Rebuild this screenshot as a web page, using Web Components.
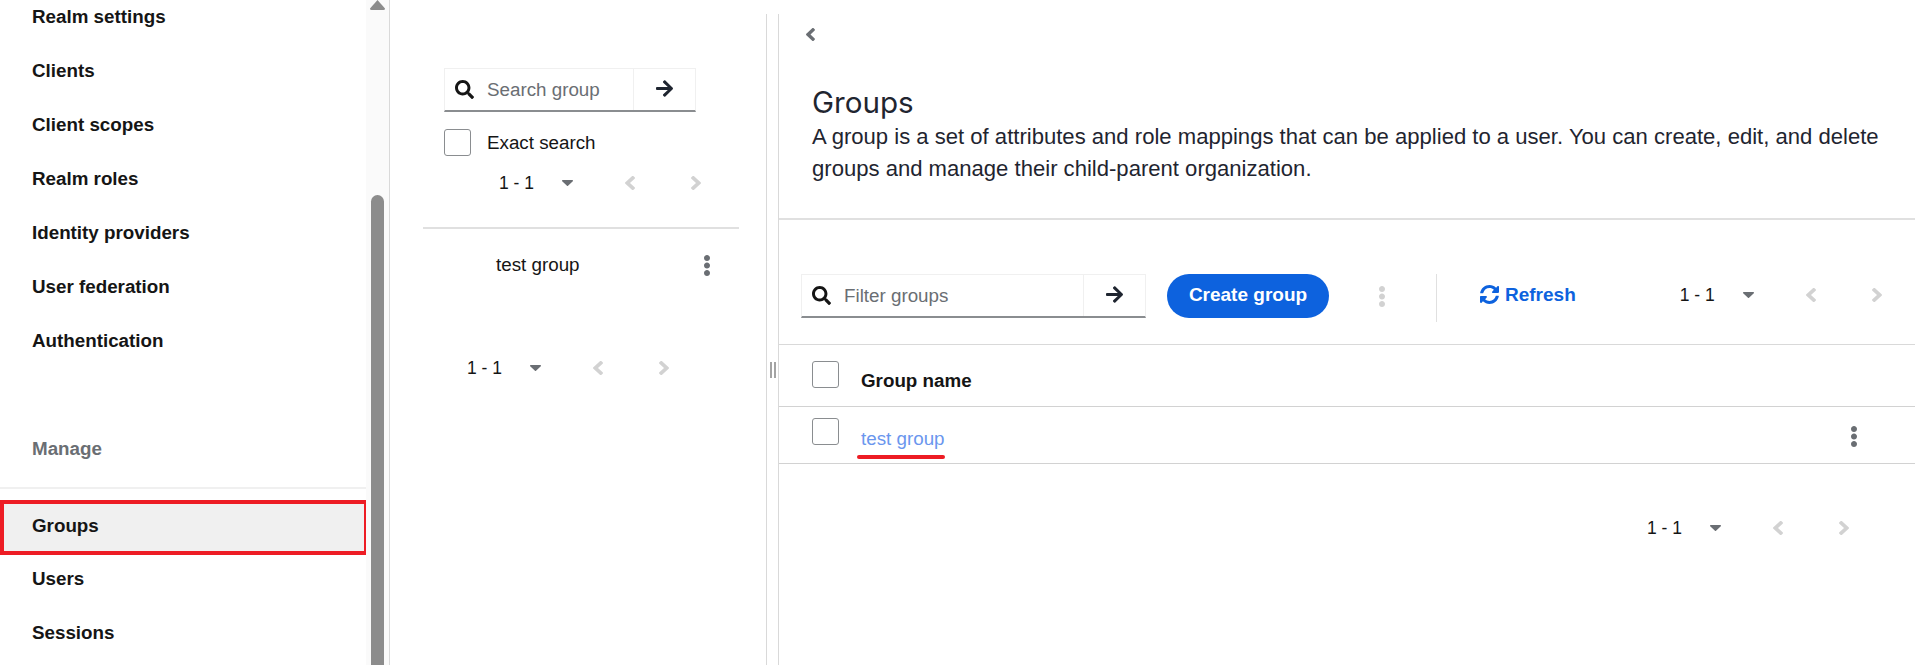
<!DOCTYPE html>
<html>
<head>
<meta charset="utf-8">
<title>Groups</title>
<style>
  html, body { margin: 0; height: 100%; overflow: hidden; background: #fff; }
  body { font-family: "Liberation Sans", Arial, sans-serif; color: #151515; }
</style>
</head>
<body>
<groups-page></groups-page>

<script>
const ICONS = {
  search: '<svg viewBox="0 0 512 512" fill="currentColor"><path d="M505 442.7 405.3 343c-4.5-4.5-10.6-7-17-7H372c27.6-35.3 44-79.7 44-128C416 93.1 322.9 0 208 0S0 93.1 0 208s93.1 208 208 208c48.3 0 92.7-16.4 128-44v16.3c0 6.4 2.5 12.5 7 17l99.7 99.7c9.4 9.4 24.6 9.4 33.9 0l28.3-28.3c9.4-9.4 9.4-24.6.1-34zM208 336c-70.7 0-128-57.2-128-128 0-70.7 57.2-128 128-128 70.7 0 128 57.2 128 128 0 70.7-57.2 128-128 128z"/></svg>',
  arrow: '<svg viewBox="0 32 448 448" fill="currentColor"><path d="m190.5 66.9 22.2-22.2c9.4-9.4 24.6-9.4 33.9 0L441 239c9.4 9.4 9.4 24.6 0 33.9L246.6 467.3c-9.4 9.4-24.6 9.4-33.9 0l-22.2-22.2c-9.5-9.5-9.3-25 .4-34.3L311.4 296H24c-13.3 0-24-10.7-24-24v-32c0-13.3 10.7-24 24-24h287.4L190.9 101.2c-9.8-9.3-10-24.8-.4-34.3z"/></svg>',
  caret: '<svg viewBox="12 192 296 170" preserveAspectRatio="none" fill="currentColor"><path d="M31.3 192h257.3c17.8 0 26.7 21.5 14.1 34.1L174.1 354.8c-7.8 7.8-20.5 7.8-28.3 0L17.2 226.1C4.6 213.5 13.5 192 31.3 192z"/></svg>',
  left: '<svg viewBox="24 96 208 320" preserveAspectRatio="none" fill="currentColor"><path d="M31.7 239l136-136c9.4-9.4 24.6-9.4 33.9 0l22.6 22.6c9.4 9.4 9.4 24.6 0 33.9L127.9 256l96.4 96.4c9.4 9.4 9.4 24.6 0 33.9L201.7 409c-9.4 9.4-24.6 9.4-33.9 0l-136-136c-9.5-9.4-9.5-24.6-.1-34z"/></svg>',
  right: '<svg viewBox="24 96 208 320" preserveAspectRatio="none" fill="currentColor"><path d="M224.3 273l-136 136c-9.4 9.4-24.6 9.4-33.9 0l-22.6-22.6c-9.4-9.4-9.4-24.6 0-33.9l96.4-96.4-96.4-96.4c-9.4-9.4-9.4-24.6 0-33.9L54.3 103c9.4-9.4 24.6-9.4 33.9 0l136 136c9.5 9.4 9.5 24.6.1 34z"/></svg>',
  kebab: '<svg viewBox="24 8 144 496" preserveAspectRatio="none" fill="currentColor"><path d="M96 184c39.8 0 72 32.2 72 72s-32.2 72-72 72-72-32.2-72-72 32.2-72 72-72zM24 80c0 39.8 32.2 72 72 72s72-32.2 72-72S135.8 8 96 8 24 40.2 24 80zm0 352c0 39.8 32.2 72 72 72s72-32.2 72-72-32.2-72-72-72-72 32.2-72 72z"/></svg>',
  sync: '<svg viewBox="8 8 496 496" fill="currentColor"><path d="M370.72 133.28C339.458 104.008 298.888 87.962 255.848 88c-77.458.068-144.328 53.178-162.791 126.85-1.344 5.363-6.122 9.15-11.651 9.15H24.103c-7.498 0-13.194-6.807-11.807-14.176C33.933 94.924 134.813 8 256 8c66.448 0 126.791 26.136 171.315 68.685L463.03 40.97C478.149 25.851 504 36.559 504 57.941V192c0 13.255-10.745 24-24 24H345.941c-21.382 0-32.09-25.851-16.971-40.971l41.75-41.749zM32 296h134.059c21.382 0 32.09 25.851 16.971 40.971l-41.75 41.75c31.262 29.273 71.835 45.319 114.876 45.28 77.418-.07 144.315-53.144 162.787-126.849 1.344-5.363 6.122-9.15 11.651-9.15h57.304c7.498 0 13.194 6.807 11.807 14.176C478.067 417.076 377.187 504 256 504c-66.448 0-126.791-26.136-171.315-68.685L48.97 471.03C33.851 486.149 8 475.441 8 454.059V320c0-13.255 10.745-24 24-24z"/></svg>'
};

class KcIcon extends HTMLElement {
  constructor() {
    super();
    this.attachShadow({ mode: 'open' });
    const w = this.getAttribute('w') || 16;
    const h = this.getAttribute('h') || 16;
    this.shadowRoot.innerHTML = `
      <style>
        :host { display: inline-flex; flex: none; width: ${w}px; height: ${h}px; }
        svg { display: block; width: 100%; height: 100%; }
      </style>
      ${ICONS[this.getAttribute('name')]}`;
  }
}
customElements.define('kc-icon', KcIcon);

const checkboxTemplate = document.createElement('template');
checkboxTemplate.innerHTML = `
  <style>
    :host {
      display: block; flex: none; box-sizing: border-box;
      width: 27px; height: 27px;
      border: 1px solid #8a8d90; border-radius: 3px; background: #fff;
    }
  </style>`;
class KcCheckbox extends HTMLElement {
  constructor() {
    super();
    this.attachShadow({ mode: 'open' }).appendChild(checkboxTemplate.content.cloneNode(true));
  }
}
customElements.define('kc-checkbox', KcCheckbox);

const navItemTemplate = document.createElement('template');
navItemTemplate.innerHTML = `
  <style>
    :host {
      display: flex; align-items: center; box-sizing: border-box;
      height: 54px; padding-left: 32px;
      font-size: 18.8px; font-weight: 700; color: #151515;
    }
    :host([current]) {
      height: 55px; width: 368px; margin-bottom: -3px; padding: 0 0 4px 28px;
      background: #f0f0f0; border: 4px solid #ed1c24;
    }
  </style>
  <slot></slot>`;
class NavItem extends HTMLElement {
  constructor() {
    super();
    this.attachShadow({ mode: 'open' }).appendChild(navItemTemplate.content.cloneNode(true));
  }
}
customElements.define('nav-item', NavItem);

const sideNavTemplate = document.createElement('template');
sideNavTemplate.innerHTML = `
  <style>
    :host {
      display: flex; flex: none; width: 390px; height: 665px; box-sizing: border-box;
      border-right: 1px solid #d9d9d9; overflow: hidden;
    }
    .list { flex: none; width: 366px; margin-top: -10px; }
    .section {
      margin-top: 54px; height: 54px; display: flex; align-items: center;
      padding-left: 32px; font-size: 18.8px; font-weight: 700; color: #6a6e73;
    }
    hr { margin: 11px 0 11px; border: 0; border-top: 2px solid #f0f0f0; }
    .track {
      flex: 1; background: #fafafa; display: flex; flex-direction: column; align-items: center;
    }
    .up { flex: none; width: 15px; height: 10px; display: block; }
    .thumb { flex: 1; width: 13px; margin-top: 185px; background: #8c8c8c; border-radius: 7px 7px 0 0; }
  </style>
  <div class="list">
    <nav-item>Realm settings</nav-item>
    <nav-item>Clients</nav-item>
    <nav-item>Client scopes</nav-item>
    <nav-item>Realm roles</nav-item>
    <nav-item>Identity providers</nav-item>
    <nav-item>User federation</nav-item>
    <nav-item>Authentication</nav-item>
    <div class="section">Manage</div>
    <hr>
    <nav-item current>Groups</nav-item>
    <nav-item>Users</nav-item>
    <nav-item>Sessions</nav-item>
  </div>
  <div class="track">
    <svg class="up" viewBox="0 0 15 10"><path d="M7.5 0 15 8.5Q15 10 13.5 10H1.5Q0 10 0 8.5Z" fill="#8c8c8c"/></svg>
    <div class="thumb"></div>
  </div>`;
class SideNav extends HTMLElement {
  constructor() {
    super();
    this.attachShadow({ mode: 'open' }).appendChild(sideNavTemplate.content.cloneNode(true));
  }
}
customElements.define('side-nav', SideNav);

const searchTemplate = document.createElement('template');
searchTemplate.innerHTML = `
  <style>
    :host {
      display: flex; box-sizing: border-box; flex: none; height: 44px;
      border: 1px solid #f0f0f0; border-bottom: 2px solid #8a8d90;
      font-size: 18.8px; color: #6a6e73;
    }
    .field { flex: 1; display: flex; align-items: center; gap: 13px; padding-left: 10px; }
    .field kc-icon { color: #151515; }
    .go {
      flex: none; width: 62px; border-left: 1px solid #f0f0f0; color: #1f2530;
      display: flex; align-items: center; justify-content: center; padding-bottom: 3px; box-sizing: border-box;
    }
  </style>
  <div class="field"><kc-icon name="search" w="19" h="19"></kc-icon><span><slot></slot></span></div>
  <div class="go"><kc-icon name="arrow" w="17" h="17"></kc-icon></div>`;
class KcSearch extends HTMLElement {
  constructor() {
    super();
    this.attachShadow({ mode: 'open' }).appendChild(searchTemplate.content.cloneNode(true));
  }
}
customElements.define('kc-search', KcSearch);

const pagerTemplate = document.createElement('template');
pagerTemplate.innerHTML = `
  <style>
    :host {
      display: flex; align-items: center; flex: none; height: 24px;
      font-size: 17.5px; color: #151515;
    }
    .count { width: 63px; white-space: nowrap; }
    .caret { color: #6a6e73; }
    .prev { margin-left: 52px; color: #d2d2d2; }
    .next { margin-left: 56px; color: #d2d2d2; }
  </style>
  <span class="count">1 - 1</span>
  <kc-icon class="caret" name="caret" w="11" h="6"></kc-icon>
  <kc-icon class="prev" name="left" w="10" h="14"></kc-icon>
  <kc-icon class="next" name="right" w="10" h="14"></kc-icon>`;
class KcPager extends HTMLElement {
  constructor() {
    super();
    this.attachShadow({ mode: 'open' }).appendChild(pagerTemplate.content.cloneNode(true));
  }
}
customElements.define('kc-pager', KcPager);

const treeTemplate = document.createElement('template');
treeTemplate.innerHTML = `
  <style>
    :host {
      display: block; flex: none; width: 376px; height: 665px; box-sizing: border-box;
      font-size: 18.8px; color: #151515;
    }
    .top { padding: 68px 0 0 54px; }
    kc-search { width: 252px; }
    .exact { display: flex; align-items: center; gap: 16px; margin-top: 17px; }
    .top kc-pager { margin: 15px 0 0 55px; }
    .rule { margin: 32px 27px 0 33px; border-top: 2px solid #e0e0e0; }
    .node { display: flex; align-items: center; justify-content: space-between; height: 24px; margin: 24px 0 0 106px; padding-right: 56px; }
    .node kc-icon { color: #6a6e73; }
    .bottom { margin: 79px 0 0 77px; }
  </style>
  <div class="top">
    <kc-search>Search group</kc-search>
    <div class="exact"><kc-checkbox></kc-checkbox><span>Exact search</span></div>
    <kc-pager></kc-pager>
  </div>
  <div class="rule"></div>
  <div class="node"><span>test group</span><kc-icon name="kebab" w="6" h="21"></kc-icon></div>
  <kc-pager class="bottom"></kc-pager>`;
class GroupTree extends HTMLElement {
  constructor() {
    super();
    this.attachShadow({ mode: 'open' }).appendChild(treeTemplate.content.cloneNode(true));
  }
}
customElements.define('group-tree', GroupTree);

const splitterTemplate = document.createElement('template');
splitterTemplate.innerHTML = `
  <style>
    :host {
      display: flex; flex: none; justify-content: center; gap: 2px; box-sizing: border-box;
      width: 13px; height: 651px; margin-top: 14px; padding: 348px 0 0 1px;
      border-left: 1px solid #d9d9d9; border-right: 1px solid #d9d9d9;
    }
    i { display: block; width: 2px; height: 16px; background: #a3a3a3; }
  </style>
  <i></i><i></i>`;
class SplitHandle extends HTMLElement {
  constructor() {
    super();
    this.attachShadow({ mode: 'open' }).appendChild(splitterTemplate.content.cloneNode(true));
  }
}
customElements.define('split-handle', SplitHandle);

const tableRowTemplate = document.createElement('template');
tableRowTemplate.innerHTML = `
  <style>
    :host {
      display: flex; box-sizing: border-box; padding: 11px 0 0 33px;
      border-bottom: 1px solid #d2d2d2; font-size: 18.8px;
    }
    .cell { margin-left: 22px; flex: 1; }
    .end { margin-right: 58px; }
  </style>
  <kc-checkbox></kc-checkbox>
  <div class="cell"><slot></slot></div>
  <div class="end"><slot name="end"></slot></div>`;
class GroupRow extends HTMLElement {
  constructor() {
    super();
    this.attachShadow({ mode: 'open' }).appendChild(tableRowTemplate.content.cloneNode(true));
  }
}
customElements.define('group-row', GroupRow);

const mainTemplate = document.createElement('template');
mainTemplate.innerHTML = `
  <style>
    :host { display: block; flex: 1; min-width: 0; height: 665px; color: #151515; }
    .back { display: block; padding: 28px 0 0 27px; color: #6a6e73; }
    .head { box-sizing: border-box; height: 179px; padding: 44px 30px 0 33px; border-bottom: 2px solid #e0e0e0; }
    h1 { margin: 0; font: 400 29.6px/34px Inter, "Liberation Sans", sans-serif; color: #1f2530; }
    p { margin: 2px 0 0; font-size: 22.08px; line-height: 32px; color: #1f2530; }
    .bar {
      display: flex; align-items: flex-start; box-sizing: border-box; height: 125px; padding: 54px 0 0 22px;
      border-bottom: 1px solid #d9d9d9;
    }
    kc-search { width: 345px; }
    .create {
      flex: none; box-sizing: border-box; width: 162px; height: 44px; margin-left: 21px; padding-bottom: 2px;
      display: flex; align-items: center; justify-content: center;
      background: #0d62de; color: #fff; border-radius: 22px; font-size: 19px; font-weight: 700;
    }
    .dim { margin: 12px 0 0 50px; color: #d2d2d2; }
    .sep { flex: none; width: 1px; height: 48px; margin-left: 51px; background: #e0e0e0; }
    .refresh {
      flex: none; display: flex; align-items: center; gap: 6px; height: 41px; margin-left: 43px;
      color: #0d62de; font-size: 19px; font-weight: 700;
    }
    .bar kc-pager { margin: 9px 0 0 104px; }
    .name { font-weight: 700; display: block; padding-top: 9px; }
    .link { display: inline-block; position: relative; color: #6a96ee; padding-top: 10px; }
    /* hand drawn red mark in the screenshot */
    .link::after {
      content: ""; position: absolute; left: -4px; right: 0; bottom: -9px; height: 4px;
      background: #ed1c24; border-radius: 2px;
    }
    .row-head { height: 62px; padding-top: 16px; }
    .row-body { height: 57px; }
    .row-end { display: block; margin-top: 8px; color: #6a6e73; }
    .foot { display: flex; justify-content: flex-end; padding: 52px 66px 0 0; }
  </style>
  <kc-icon class="back" name="left" w="9" h="13"></kc-icon>
  <div class="head">
    <h1>Groups</h1>
    <p>A group is a set of attributes and role mappings that can be applied to a user. You can create, edit, and delete groups and manage their child-parent organization.</p>
  </div>
  <div class="bar">
    <kc-search>Filter groups</kc-search>
    <div class="create">Create group</div>
    <kc-icon class="dim" name="kebab" w="6" h="21"></kc-icon>
    <div class="sep"></div>
    <div class="refresh"><kc-icon name="sync" w="19" h="19"></kc-icon>Refresh</div>
    <kc-pager></kc-pager>
  </div>
  <group-row class="row-head"><span class="name">Group name</span></group-row>
  <group-row class="row-body"><span class="link">test group</span><kc-icon class="row-end" slot="end" name="kebab" w="6" h="21"></kc-icon></group-row>
  <div class="foot"><kc-pager></kc-pager></div>`;
class GroupMain extends HTMLElement {
  constructor() {
    super();
    this.attachShadow({ mode: 'open' }).appendChild(mainTemplate.content.cloneNode(true));
  }
}
customElements.define('group-main', GroupMain);

const pageTemplate = document.createElement('template');
pageTemplate.innerHTML = `
  <style>
    :host { display: flex; width: 1915px; height: 665px; overflow: hidden; }
  </style>
  <side-nav></side-nav>
  <group-tree></group-tree>
  <split-handle></split-handle>
  <group-main></group-main>`;
class GroupsPage extends HTMLElement {
  constructor() {
    super();
    this.attachShadow({ mode: 'open' }).appendChild(pageTemplate.content.cloneNode(true));
  }
}
customElements.define('groups-page', GroupsPage);
</script>
</body>
</html>
